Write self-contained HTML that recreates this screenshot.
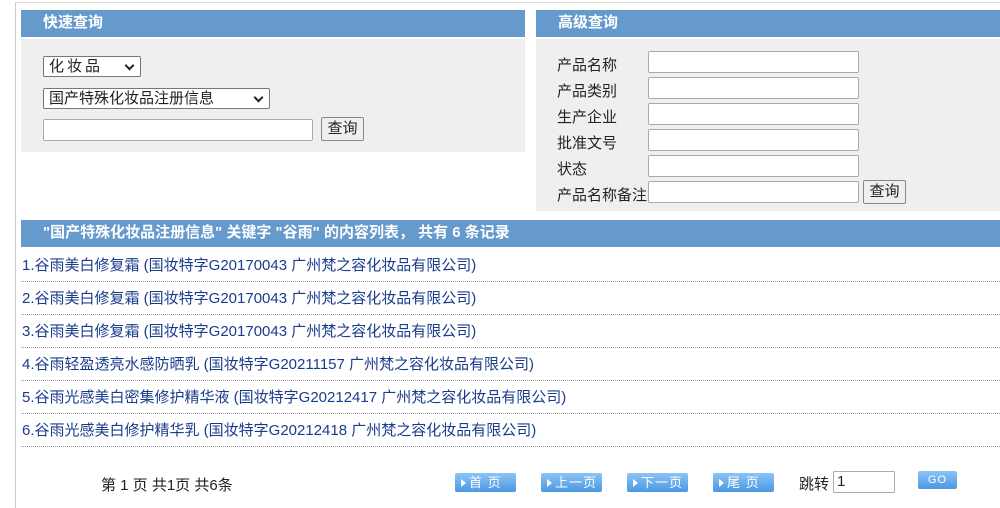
<!DOCTYPE html>
<html><head><meta charset="utf-8"><style>
*{margin:0;padding:0;box-sizing:border-box}
body{width:1000px;height:508px;background:#fff;position:relative;overflow:hidden;font-family:"Liberation Sans","Noto Sans CJK SC",sans-serif;font-size:15px;color:#222}
.a{position:absolute}
.hd{background:#6699cc;color:#fff;font-weight:bold;font-size:15px;line-height:26px}
.bd{background:#efefef}
.in{position:absolute;background:#fff;border:1px solid #aaa;border-radius:2px}
.btn{position:absolute;background:#efefef;border:1px solid #888;border-radius:2px;font-size:15px;text-align:center;line-height:22px}
.sel{position:absolute;background:#fff;border:1px solid #777;border-radius:2px;font-size:15px;line-height:19px;padding-left:5px}
.sel:after{content:"";position:absolute;right:7px;top:5px;width:5px;height:5px;border-right:2px solid #222;border-bottom:2px solid #222;transform:rotate(45deg)}
.lab{position:absolute;left:557px;font-size:15px}
.row{position:absolute;left:21px;width:979px;height:33px;border-bottom:1px dotted #999;color:#1a3c8c;font-size:15px;line-height:33px;padding-left:1px}
.pb{position:absolute;top:473px;width:61px;height:19px;background:linear-gradient(#8cc4f4,#4a98e4);border-radius:2px;color:#fff;font-size:13px;line-height:19px;padding-left:14px;letter-spacing:1px}
.pb:before{content:"";position:absolute;left:6px;top:6px;border-left:5px solid #fff;border-top:4px solid transparent;border-bottom:4px solid transparent}
.go:before{display:none}
</style></head><body>
<div class="a" style="left:15px;top:2px;width:985px;height:1px;background:#ddd"></div>
<div class="a" style="left:15px;top:2px;width:1px;height:506px;background:#ccc"></div>

<div class="a hd" style="left:21px;top:10px;width:504px;height:27px;padding-left:22px">快速查询</div>
<div class="a bd" style="left:21px;top:39px;width:504px;height:113px"></div>
<div class="sel" style="left:43px;top:56px;width:98px;height:21px;letter-spacing:3px">化妆品</div>
<div class="sel" style="left:43px;top:88px;width:227px;height:21px">国产特殊化妆品注册信息</div>
<div class="in" style="left:43px;top:119px;width:270px;height:22px"></div>
<div class="btn" style="left:321px;top:117px;width:43px;height:24px">查询</div>

<div class="a hd" style="left:536px;top:10px;width:464px;height:27px;padding-left:22px">高级查询</div>
<div class="a bd" style="left:536px;top:39px;width:464px;height:172px"></div>
<div class="lab" style="top:54px">产品名称</div>
<div class="lab" style="top:80px">产品类别</div>
<div class="lab" style="top:106px">生产企业</div>
<div class="lab" style="top:132px">批准文号</div>
<div class="lab" style="top:158px">状态</div>
<div class="lab" style="top:184px">产品名称备注</div>
<div class="in" style="left:648px;top:51px;width:211px;height:22px"></div>
<div class="in" style="left:648px;top:77px;width:211px;height:22px"></div>
<div class="in" style="left:648px;top:103px;width:211px;height:22px"></div>
<div class="in" style="left:648px;top:129px;width:211px;height:22px"></div>
<div class="in" style="left:648px;top:155px;width:211px;height:22px"></div>
<div class="in" style="left:648px;top:181px;width:211px;height:22px"></div>
<div class="btn" style="left:863px;top:180px;width:43px;height:24px">查询</div>

<div class="a hd" style="left:21px;top:220px;width:979px;height:27px;padding-left:22px">"国产特殊化妆品注册信息" 关键字 "谷雨" 的内容列表， 共有 6 条记录</div>
<div class="row" style="top:249px">1.谷雨美白修复霜 (国妆特字G20170043 广州梵之容化妆品有限公司)</div>
<div class="row" style="top:282px">2.谷雨美白修复霜 (国妆特字G20170043 广州梵之容化妆品有限公司)</div>
<div class="row" style="top:315px">3.谷雨美白修复霜 (国妆特字G20170043 广州梵之容化妆品有限公司)</div>
<div class="row" style="top:348px">4.谷雨轻盈透亮水感防晒乳 (国妆特字G20211157 广州梵之容化妆品有限公司)</div>
<div class="row" style="top:381px">5.谷雨光感美白密集修护精华液 (国妆特字G20212417 广州梵之容化妆品有限公司)</div>
<div class="row" style="top:414px">6.谷雨光感美白修护精华乳 (国妆特字G20212418 广州梵之容化妆品有限公司)</div>

<div class="a" style="left:101px;top:474px;font-size:15px">第 1 页 共1页 共6条</div>
<div class="pb" style="left:455px">首&nbsp;页</div>
<div class="pb" style="left:541px">上一页</div>
<div class="pb" style="left:627px">下一页</div>
<div class="pb" style="left:713px">尾&nbsp;页</div>
<div class="a" style="left:799px;top:473px">跳转</div>
<div class="in" style="left:833px;top:471px;width:62px;height:22px;padding-left:3px;line-height:20px">1</div>
<div class="pb go" style="left:918px;top:471px;width:39px;height:18px;padding-left:0;text-align:center;font-size:11px;line-height:18px">GO</div>
</body></html>
